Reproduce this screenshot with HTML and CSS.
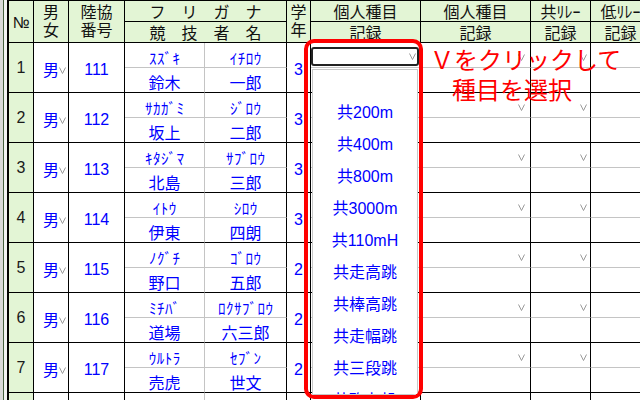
FILE: index.html
```html
<!DOCTYPE html>
<html lang="ja">
<head>
<meta charset="utf-8">
<title>競技者一覧</title>
<link rel="stylesheet" href="styles.css">
</head>
<body>
<div class="page">
  <div class="strip"></div>
  <div class="grid">
    <div class="c h r2 no">№</div>
    <div class="c h r2 two"><span>男</span><span>女</span></div>
    <div class="c h r2 two"><span>陸協</span><span>番号</span></div>
    <div class="c h c2 sp">フリガナ</div>
    <div class="c h r2 two"><span>学</span><span>年</span></div>
    <div class="c h">個人種目</div>
    <div class="c h">個人種目</div>
    <div class="c h">共ﾘﾚｰ</div>
    <div class="c h">低ﾘﾚｰ</div>
    <div class="c h c2 sp">競技者名</div>
    <div class="c h">記録</div>
    <div class="c h">記録</div>
    <div class="c h">記録</div>
    <div class="c h">記録</div>

    <div class="c r2 num">1</div>
    <div class="c r2 sex">男<svg class="v vs" viewBox="0 0 7 7"><path d="M0.5 0.5L3.5 6.5L6.5 0.5"/></svg></div>
    <div class="c r2 id">111</div>
    <div class="c kana gr">ｽｽﾞｷ</div>
    <div class="c kana">ｲﾁﾛｳ</div>
    <div class="c r2 yr">3</div>
    <div class="c rt w"><svg class="v" viewBox="0 0 7 7"><path d="M0.5 0.5L3.5 6.5L6.5 0.5"/></svg></div>
    <div class="c rt w"><svg class="v" viewBox="0 0 7 7"><path d="M0.5 0.5L3.5 6.5L6.5 0.5"/></svg></div>
    <div class="c rt n"><svg class="v" viewBox="0 0 7 7"><path d="M0.5 0.5L3.5 6.5L6.5 0.5"/></svg></div>
    <div class="c rt n"><svg class="v" viewBox="0 0 7 7"><path d="M0.5 0.5L3.5 6.5L6.5 0.5"/></svg></div>
    <div class="c name gr">鈴木</div>
    <div class="c name">一郎</div>
    <div class="c"></div><div class="c"></div><div class="c"></div><div class="c"></div>

    <div class="c r2 num">2</div>
    <div class="c r2 sex">男<svg class="v vs" viewBox="0 0 7 7"><path d="M0.5 0.5L3.5 6.5L6.5 0.5"/></svg></div>
    <div class="c r2 id">112</div>
    <div class="c kana gr">ｻｶｶﾞﾐ</div>
    <div class="c kana">ｼﾞﾛｳ</div>
    <div class="c r2 yr">3</div>
    <div class="c rt w"><svg class="v" viewBox="0 0 7 7"><path d="M0.5 0.5L3.5 6.5L6.5 0.5"/></svg></div>
    <div class="c rt w"><svg class="v" viewBox="0 0 7 7"><path d="M0.5 0.5L3.5 6.5L6.5 0.5"/></svg></div>
    <div class="c rt n"><svg class="v" viewBox="0 0 7 7"><path d="M0.5 0.5L3.5 6.5L6.5 0.5"/></svg></div>
    <div class="c rt n"><svg class="v" viewBox="0 0 7 7"><path d="M0.5 0.5L3.5 6.5L6.5 0.5"/></svg></div>
    <div class="c name gr">坂上</div>
    <div class="c name">二郎</div>
    <div class="c"></div><div class="c"></div><div class="c"></div><div class="c"></div>

    <div class="c r2 num">3</div>
    <div class="c r2 sex">男<svg class="v vs" viewBox="0 0 7 7"><path d="M0.5 0.5L3.5 6.5L6.5 0.5"/></svg></div>
    <div class="c r2 id">113</div>
    <div class="c kana gr">ｷﾀｼﾞﾏ</div>
    <div class="c kana">ｻﾌﾞﾛｳ</div>
    <div class="c r2 yr">3</div>
    <div class="c rt w"><svg class="v" viewBox="0 0 7 7"><path d="M0.5 0.5L3.5 6.5L6.5 0.5"/></svg></div>
    <div class="c rt w"><svg class="v" viewBox="0 0 7 7"><path d="M0.5 0.5L3.5 6.5L6.5 0.5"/></svg></div>
    <div class="c rt n"><svg class="v" viewBox="0 0 7 7"><path d="M0.5 0.5L3.5 6.5L6.5 0.5"/></svg></div>
    <div class="c rt n"><svg class="v" viewBox="0 0 7 7"><path d="M0.5 0.5L3.5 6.5L6.5 0.5"/></svg></div>
    <div class="c name gr">北島</div>
    <div class="c name">三郎</div>
    <div class="c"></div><div class="c"></div><div class="c"></div><div class="c"></div>

    <div class="c r2 num">4</div>
    <div class="c r2 sex">男<svg class="v vs" viewBox="0 0 7 7"><path d="M0.5 0.5L3.5 6.5L6.5 0.5"/></svg></div>
    <div class="c r2 id">114</div>
    <div class="c kana gr">ｲﾄｳ</div>
    <div class="c kana">ｼﾛｳ</div>
    <div class="c r2 yr">3</div>
    <div class="c rt w"><svg class="v" viewBox="0 0 7 7"><path d="M0.5 0.5L3.5 6.5L6.5 0.5"/></svg></div>
    <div class="c rt w"><svg class="v" viewBox="0 0 7 7"><path d="M0.5 0.5L3.5 6.5L6.5 0.5"/></svg></div>
    <div class="c rt n"><svg class="v" viewBox="0 0 7 7"><path d="M0.5 0.5L3.5 6.5L6.5 0.5"/></svg></div>
    <div class="c rt n"><svg class="v" viewBox="0 0 7 7"><path d="M0.5 0.5L3.5 6.5L6.5 0.5"/></svg></div>
    <div class="c name gr">伊東</div>
    <div class="c name">四朗</div>
    <div class="c"></div><div class="c"></div><div class="c"></div><div class="c"></div>

    <div class="c r2 num">5</div>
    <div class="c r2 sex">男<svg class="v vs" viewBox="0 0 7 7"><path d="M0.5 0.5L3.5 6.5L6.5 0.5"/></svg></div>
    <div class="c r2 id">115</div>
    <div class="c kana gr">ﾉｸﾞﾁ</div>
    <div class="c kana">ｺﾞﾛｳ</div>
    <div class="c r2 yr">2</div>
    <div class="c rt w"><svg class="v" viewBox="0 0 7 7"><path d="M0.5 0.5L3.5 6.5L6.5 0.5"/></svg></div>
    <div class="c rt w"><svg class="v" viewBox="0 0 7 7"><path d="M0.5 0.5L3.5 6.5L6.5 0.5"/></svg></div>
    <div class="c rt n"><svg class="v" viewBox="0 0 7 7"><path d="M0.5 0.5L3.5 6.5L6.5 0.5"/></svg></div>
    <div class="c rt n"><svg class="v" viewBox="0 0 7 7"><path d="M0.5 0.5L3.5 6.5L6.5 0.5"/></svg></div>
    <div class="c name gr">野口</div>
    <div class="c name">五郎</div>
    <div class="c"></div><div class="c"></div><div class="c"></div><div class="c"></div>

    <div class="c r2 num">6</div>
    <div class="c r2 sex">男<svg class="v vs" viewBox="0 0 7 7"><path d="M0.5 0.5L3.5 6.5L6.5 0.5"/></svg></div>
    <div class="c r2 id">116</div>
    <div class="c kana gr">ﾐﾁﾊﾞ</div>
    <div class="c kana">ﾛｸｻﾌﾞﾛｳ</div>
    <div class="c r2 yr">2</div>
    <div class="c rt w"><svg class="v" viewBox="0 0 7 7"><path d="M0.5 0.5L3.5 6.5L6.5 0.5"/></svg></div>
    <div class="c rt w"><svg class="v" viewBox="0 0 7 7"><path d="M0.5 0.5L3.5 6.5L6.5 0.5"/></svg></div>
    <div class="c rt n"><svg class="v" viewBox="0 0 7 7"><path d="M0.5 0.5L3.5 6.5L6.5 0.5"/></svg></div>
    <div class="c rt n"><svg class="v" viewBox="0 0 7 7"><path d="M0.5 0.5L3.5 6.5L6.5 0.5"/></svg></div>
    <div class="c name gr">道場</div>
    <div class="c name">六三郎</div>
    <div class="c"></div><div class="c"></div><div class="c"></div><div class="c"></div>

    <div class="c r2 num">7</div>
    <div class="c r2 sex">男<svg class="v vs" viewBox="0 0 7 7"><path d="M0.5 0.5L3.5 6.5L6.5 0.5"/></svg></div>
    <div class="c r2 id">117</div>
    <div class="c kana gr">ｳﾙﾄﾗ</div>
    <div class="c kana">ｾﾌﾞﾝ</div>
    <div class="c r2 yr">2</div>
    <div class="c rt w"><svg class="v" viewBox="0 0 7 7"><path d="M0.5 0.5L3.5 6.5L6.5 0.5"/></svg></div>
    <div class="c rt w"><svg class="v" viewBox="0 0 7 7"><path d="M0.5 0.5L3.5 6.5L6.5 0.5"/></svg></div>
    <div class="c rt n"><svg class="v" viewBox="0 0 7 7"><path d="M0.5 0.5L3.5 6.5L6.5 0.5"/></svg></div>
    <div class="c rt n"><svg class="v" viewBox="0 0 7 7"><path d="M0.5 0.5L3.5 6.5L6.5 0.5"/></svg></div>
    <div class="c name gr">売虎</div>
    <div class="c name">世文</div>
    <div class="c"></div><div class="c"></div><div class="c"></div><div class="c"></div>

    <div class="c r2 num"></div>
    <div class="c r2 sex"></div>
    <div class="c r2 id"></div>
    <div class="c kana gr"></div>
    <div class="c kana"></div>
    <div class="c r2 yr"></div>
    <div class="c rt w"></div>
    <div class="c rt w"></div>
    <div class="c rt n"></div>
    <div class="c rt n"></div>
    <div class="c name gr"></div>
    <div class="c name"></div>
    <div class="c"></div><div class="c"></div><div class="c"></div><div class="c"></div>
  </div>

  <div class="dd">
    <div class="sel"><svg class="v" viewBox="0 0 7 7"><path d="M0.5 0.5L3.5 6.5L6.5 0.5"/></svg></div>
    <div class="list">
      <div class="it blank"></div>
      <div class="it">共200m</div>
      <div class="it">共400m</div>
      <div class="it">共800m</div>
      <div class="it">共3000m</div>
      <div class="it">共110mH</div>
      <div class="it">共走高跳</div>
      <div class="it">共棒高跳</div>
      <div class="it">共走幅跳</div>
      <div class="it">共三段跳</div>
      <div class="it">共砲丸投</div>
    </div>
  </div>

  <div class="note">
    <div>Ｖをクリックして</div>
    <div class="l2">種目を選択</div>
  </div>
</div>
</body>
</html>
```

FILE: styles.css
```css
* { box-sizing: border-box; }
html, body { margin: 0; padding: 0; }
body {
  width: 640px;
  height: 400px;
  overflow: hidden;
  background: #fff;
  font-family: "Liberation Sans", "Noto Sans CJK JP", sans-serif;
}
.page {
  position: relative;
  display: flex;
  width: 640px;
  height: 400px;
  overflow: hidden;
}
.strip {
  flex: 0 0 7px;
  background: linear-gradient(to right, #d9d9d9 0 3px, #46613f 3px 4px, #f3f3f3 4px 7px);
}
.grid {
  flex: 0 0 auto;
  display: grid;
  grid-template-columns: 25px 35px 56px 80px 82px 24px 110px 110px 60px 60px;
  grid-template-rows: 21px 21px;
  grid-auto-rows: 25px;
  align-content: start;
  border-left: 2px solid #000;
  border-top: 1px solid #000;
}
.c {
  border-right: 1px solid #000;
  border-bottom: 1px solid #000;
  display: flex;
  align-items: center;
  justify-content: center;
  white-space: nowrap;
  overflow: hidden;
  font-size: 16px;
  color: #0000ff;
}
.h { background: #e3f5d5; color: #111; }
.r2 { grid-row: span 2; }
.c2 { grid-column: span 2; }
.two { flex-direction: column; line-height: 18px; }
.no { padding-top: 2px; }
.sp { letter-spacing: 16px; padding-left: 16px; }

.num { background: #e3f5d5; color: #1a1a1a; }
.sex { padding-top: 2px; }
.id { padding-top: 4px; }
.yr { padding-top: 4px; }
.kana {
  font-size: 15px;
  letter-spacing: 0.5px;
  padding-left: 0.5px;
  padding-top: 5px;
  border-bottom-color: #c4c4c4;
}
.gr { border-right-color: #c4c4c4; }
.name { padding-top: 4px; }
.rt {
  border-bottom-color: #c4c4c4;
  justify-content: flex-end;
  align-items: flex-end;
  padding-bottom: 6px;
}
.rt.w { padding-right: 5px; }
.rt.n { padding-right: 3px; }

.v {
  width: 7px;
  height: 7px;
  flex: 0 0 7px;
  fill: none;
  stroke: #9a9a9a;
  stroke-width: 1;
}
.vs {
  margin-right: -7px;
  align-self: flex-end;
  margin-bottom: 18px;
}

.dd {
  position: absolute;
  left: 304px;
  top: 39px;
  width: 119px;
  height: 360px;
  border: 4px solid #ff0000;
  border-radius: 10px;
  overflow: hidden;
  display: flex;
  flex-direction: column;
  padding: 4px 0 0 3px;
}
.sel {
  flex: 0 0 19px;
  width: 108px;
  border: 2px solid #222;
  border-radius: 3px;
  background: #fff;
  display: flex;
  justify-content: flex-end;
  align-items: center;
  padding-right: 1px;
}
.list {
  flex: 1 1 auto;
  margin: 3px 0 0 1px;
  width: 106px;
  border: 1px solid #c8c8c8;
  background: #fff;
  overflow: hidden;
}
.it {
  height: 32px;
  display: flex;
  align-items: center;
  justify-content: center;
  font-size: 16px;
  color: #0000ff;
  white-space: nowrap;
}
.it.blank { height: 25px; }

.note {
  position: absolute;
  left: 430px;
  top: 44px;
  font-family: "Noto Sans CJK JP", sans-serif;
  font-size: 24px;
  line-height: 30px;
  color: #ff0000;
  white-space: nowrap;
}
.note .l2 { padding-left: 22px; }
```
